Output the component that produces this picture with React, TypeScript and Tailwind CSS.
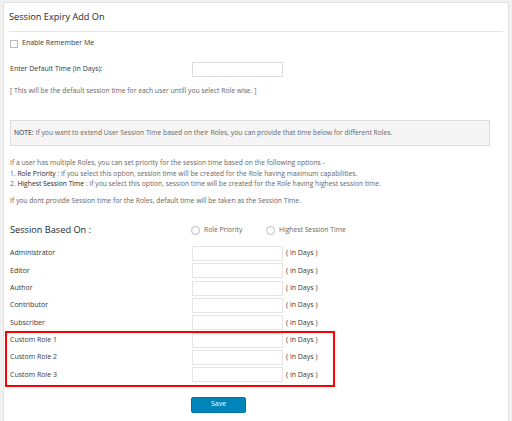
import React from "react";

const roles = [
  "Administrator",
  "Editor",
  "Author",
  "Contributor",
  "Subscriber",
  "Custom Role 1",
  "Custom Role 2",
  "Custom Role 3",
];

export default function App() {
  return (
    <div
      className="w-[512px] h-[421px] overflow-hidden bg-[#f1f1f1] pt-[2px] pl-[3px]"
      style={{ fontFamily: '"Open Sans", "Noto Sans", sans-serif' }}
    >
      <div className="w-[506px] h-[440px] bg-white border border-[#e2e2e2] text-[#444]">
        <div className="h-[28px] flex items-center pl-[5px] text-[9.2px] text-[#23282d]">
          Session Expiry Add On
        </div>
        <div className="ml-[5px] mr-[5px] h-px bg-[#e5e5e5]" />
        <div className="pl-[6px]">
          <div className="mt-[7px] h-[9px] flex items-center gap-[4px] text-[7px] text-[#32373c]">
            <span className="w-[8px] h-[8px] border border-[#bbb] bg-white shrink-0" />
            <span>Enable Remember Me</span>
          </div>
          <div className="mt-[14px] h-[15px] flex items-center text-[7px] text-[#32373c]">
            <span className="w-[182px]">Enter Default Time (in Days):</span>
            <span className="w-[91px] h-[15px] border border-[#ddd] bg-white" />
          </div>
          <div className="mt-[9px] h-[10px] flex items-center text-[6.75px] text-[#666]">
            [ This will be the default session time for each user untill you select Role wise. ]
          </div>
          <div className="mt-[24px] h-[26px] w-[480px] bg-[#f5f5f5] border border-[#dcdcdc] flex items-center pl-[3px] text-[6.75px] text-[#666]">
            <span className="text-[#23282d] mr-[2px]">NOTE:</span>
            If you want to extend User Session Time based on their Roles, you can provide that time below for different Roles.
          </div>
          <div className="mt-[12px] text-[6.75px] leading-[10.5px] text-[#666]">
            <div>If a user has multiple Roles, you can set priority for the session time based on the following options -</div>
            <div>
              1. <span className="text-[#23282d]">Role Priority</span> : If you select this option, session time will be created for the Role having maximum capabilities.
            </div>
            <div>
              2. <span className="text-[#23282d]">Highest Session Time</span> : If you select this option, session time will be created for the Role having highest session time.
            </div>
            <div className="mt-[6px]">
              If you dont provide Session time for the Roles, default time will be taken as the Session Time.
            </div>
          </div>
          <div className="mt-[17px] h-[14px] flex items-center">
            <span className="w-[181px] text-[9.2px] text-[#23282d]">Session Based On :</span>
            <span className="w-[9px] h-[9px] rounded-full border border-[#bbb] shrink-0" />
            <span className="ml-[4px] w-[62px] text-[6.75px] text-[#666]">Role Priority</span>
            <span className="w-[9px] h-[9px] rounded-full border border-[#bbb] shrink-0" />
            <span className="ml-[4px] text-[6.75px] text-[#666]">Highest Session Time</span>
          </div>
          <div className="relative mt-[9px]">
            {roles.map((r) => (
              <div key={r} className="h-[17.33px] flex items-start text-[7px] text-[#32373c]">
                <span className="w-[182px] h-[15px] flex items-center">{r}</span>
                <span className="w-[91px] h-[15px] border border-[#e5e5e5] bg-white shrink-0" />
                <span className="ml-[3px] h-[15px] flex items-center">( in Days )</span>
              </div>
            ))}
            <div className="absolute left-[-5px] top-[85px] w-[330px] h-[56px] border-2 border-[#f00]" />
          </div>
          <div className="mt-[12px] pl-[181px]">
            <button className="w-[55px] h-[16px] bg-[#0085ba] border border-[#0073aa] text-white text-[7px] rounded-[2px] flex items-center justify-center">
              Save
            </button>
          </div>
        </div>
      </div>
    </div>
  );
}
